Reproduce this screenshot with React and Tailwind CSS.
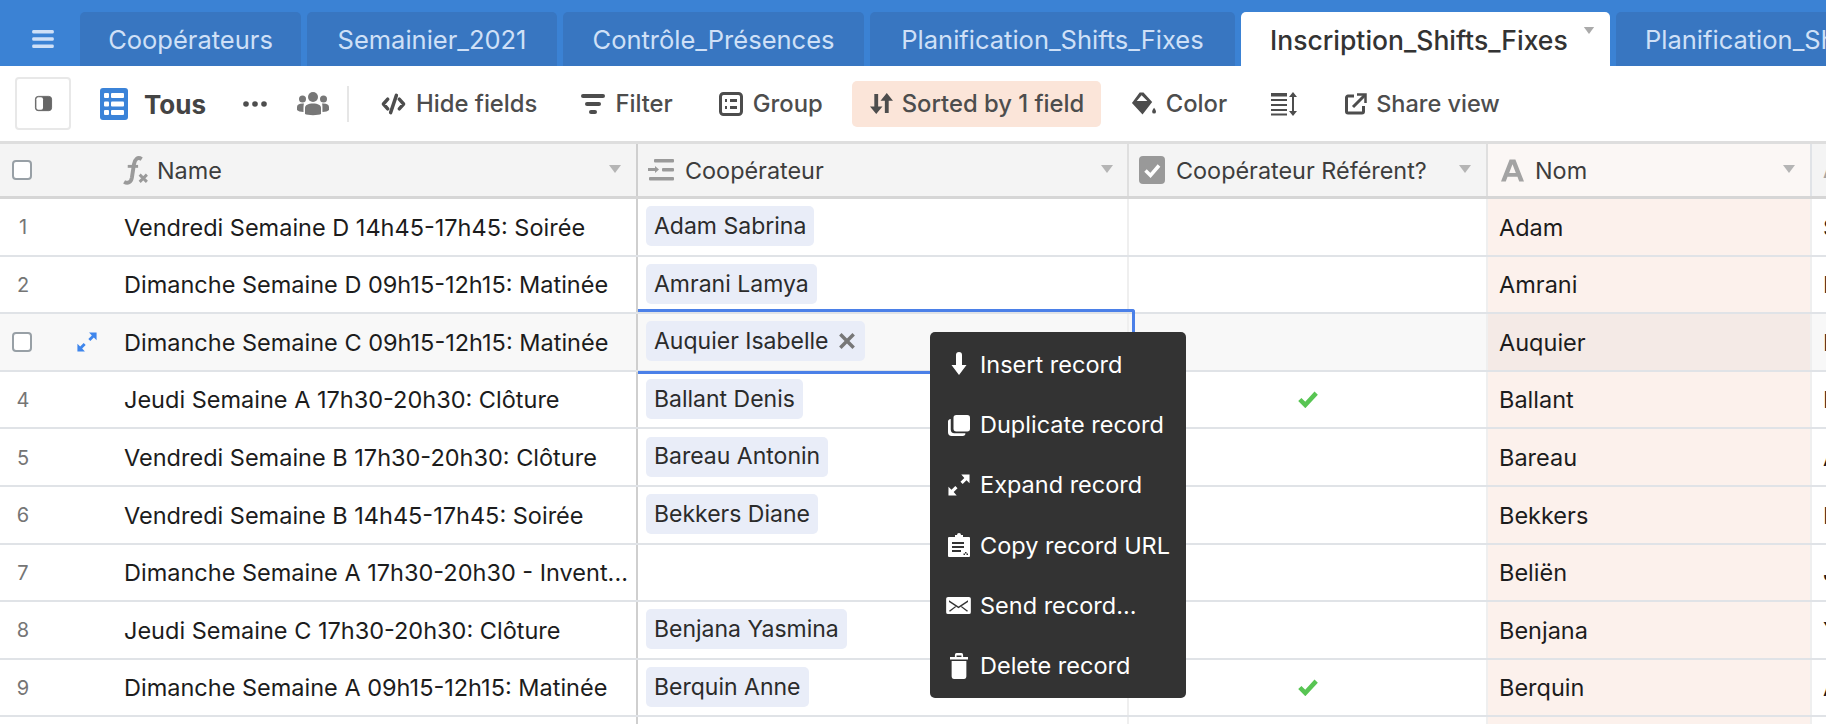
import React from 'react'

const tabs = [
  { label: 'Coopérateurs', w: 'w-[221px]' },
  { label: 'Semainier_2021', w: 'w-[250px]' },
  { label: 'Contrôle_Présences', w: 'w-[301px]' },
  { label: 'Planification_Shifts_Fixes', w: 'w-[365px]' },
]

const rows = [
  { n: 1, name: 'Vendredi Semaine D 14h45-17h45: Soirée', chip: 'Adam Sabrina', nom: 'Adam', first: 'Sabrina' },
  { n: 2, name: 'Dimanche Semaine D 09h15-12h15: Matinée', chip: 'Amrani Lamya', nom: 'Amrani', first: 'Lamya' },
  { n: 3, name: 'Dimanche Semaine C 09h15-12h15: Matinée', chip: 'Auquier Isabelle', nom: 'Auquier', first: 'Isabelle', active: true },
  { n: 4, name: 'Jeudi Semaine A 17h30-20h30: Clôture', chip: 'Ballant Denis', nom: 'Ballant', first: 'Denis', check: true },
  { n: 5, name: 'Vendredi Semaine B 17h30-20h30: Clôture', chip: 'Bareau Antonin', nom: 'Bareau', first: 'Antonin' },
  { n: 6, name: 'Vendredi Semaine B 14h45-17h45: Soirée', chip: 'Bekkers Diane', nom: 'Bekkers', first: 'Diane' },
  { n: 7, name: 'Dimanche Semaine A 17h30-20h30 - Invent...', nom: 'Beliën', first: 'Jan' },
  { n: 8, name: 'Jeudi Semaine C 17h30-20h30: Clôture', chip: 'Benjana Yasmina', nom: 'Benjana', first: 'Yasmina' },
  { n: 9, name: 'Dimanche Semaine A 09h15-12h15: Matinée', chip: 'Berquin Anne', nom: 'Berquin', first: 'Anne', check: true },
]

const Caret = ({ className }) => (
  <svg viewBox="0 0 14 10" className={className} fill="currentColor">
    <path d="M1 1h12L7 9z" />
  </svg>
)

const ExpandIcon = ({ className }) => (
  <svg viewBox="0 0 24 24" className={className} fill="currentColor">
    <path d="M23.500 .5v9.500l-3.300-3.300-4.200 4.200-2.400-2.400 4.200-4.200L14.500 .5zM.5 23.500V14l3.300 3.300 4.200-4.200 2.400 2.400-4.200 4.200 3.300 3.800z" />
  </svg>
)

const menuItems = [
  {
    label: 'Insert record',
    icon: (
      <svg viewBox="4 0 16 24" className="w-[16px] h-[24px]" fill="currentColor">
        <path d="M9 3a3 3 0 0 1 6 0v10h4.500L12 23 4.500 13H9z" />
      </svg>
    ),
  },
  {
    label: 'Duplicate record',
    icon: (
      <svg viewBox="0 0 24 24" className="w-[22px] h-[22px]" fill="currentColor">
        <path d="M9 1h12a3 3 0 0 1 3 3v12a3 3 0 0 1-3 3H9a3 3 0 0 1-3-3V4a3 3 0 0 1 3-3z" />
        <path d="M0 9a3 3 0 0 1 3-3.500V17a4 4 0 0 0 4 4h12a3 3 0 0 1-3 3H4a4 4 0 0 1-4-4z" />
      </svg>
    ),
  },
  {
    label: 'Expand record',
    icon: <ExpandIcon className="w-[22px] h-[22px]" />,
  },
  {
    label: 'Copy record URL',
    icon: (
      <svg viewBox="1 1 22 25" className="w-[22px] h-[25px]" fill="currentColor">
        <path fillRule="evenodd" d="M8 3h2a2 2 0 0 1 4 0h2v2h6a1 1 0 0 1 1 1v18a1 1 0 0 1-1 1H2a1 1 0 0 1-1-1V6a1 1 0 0 1 1-1h6zM5 10v2h12v-2zm0 4v2h12v-2zm0 4v2h9v-2zm13 2v1.500h-1.500V23H18v-1.500h1.500V23H21v-1.500h-1.500V20z" />
      </svg>
    ),
  },
  {
    label: 'Send record...',
    icon: (
      <svg viewBox="0 0 26 20" className="w-[25px] h-[19px]" fill="currentColor">
        <path fillRule="evenodd" d="M2 1h22a2 2 0 0 1 2 2v14a2 2 0 0 1-2 2H2a2 2 0 0 1-2-2V3a2 2 0 0 1 2-2zm1 3.500L13 11 23 4.500V6.200L13 13 3 6.200zM3 15.500l6.500-4.600.9.700L4 16.500zm20 0-6.500-4.600-.9.700 6.400 4.900z" />
      </svg>
    ),
  },
  {
    label: 'Delete record',
    icon: (
      <svg viewBox="1 0 22 26" className="w-[18px] h-[26px]" preserveAspectRatio="none" fill="currentColor">
        <path d="M7 2a2 2 0 0 1 2-2h6a2 2 0 0 1 2 2v2h6v2.500H1V4h6zm2 .5V4h6V2.500z" />
        <path d="M3 8h18v15a3 3 0 0 1-3 3H6a3 3 0 0 1-3-3z" />
      </svg>
    ),
  },
]

function Toolbar() {
  return (
    <div className="h-[75px] shrink-0 bg-white flex items-center text-[#4d4d4d] text-[23.800px] font-medium">
      <div className="ml-[15px] w-[56px] h-[53px] border-2 border-[#e8e8e8] rounded-[4px] flex items-center justify-center">
        <svg viewBox="0 0 20 20" className="w-[19px] h-[19px]">
          <rect x="1.500" y="2.500" width="17" height="15" rx="3" fill="#666" stroke="#666" />
          <rect x="2.500" y="3.500" width="7" height="13" rx="2" fill="#fff" />
        </svg>
      </div>
      <svg viewBox="0 0 28 32" className="ml-[29px] w-[28px] h-[32px]">
        <rect width="28" height="32" rx="3" fill="#3b83d8" />
        <g fill="#fff">
          <rect x="4" y="5" width="5" height="5" rx="1" />
          <rect x="11" y="5" width="13" height="5" rx="1" />
          <rect x="4" y="13.500" width="5" height="5" rx="1" />
          <rect x="11" y="13.500" width="13" height="5" rx="1" />
          <rect x="4" y="22" width="5" height="5" rx="1" />
          <rect x="11" y="22" width="13" height="5" rx="1" />
        </g>
      </svg>
      <span className="ml-[16px] mt-[2px] text-[26px] font-bold text-[#444]">Tous</span>
      <svg viewBox="0 0 24 6" className="ml-[37px] w-[24px] h-[6px]" fill="#4d4d4d">
        <circle cx="3" cy="3" r="2.800" />
        <circle cx="12" cy="3" r="2.800" />
        <circle cx="21" cy="3" r="2.800" />
      </svg>
      <svg viewBox="0 0 32 24" className="ml-[30px] w-[32px] h-[24px]" fill="#777">
        <circle cx="16" cy="5" r="5" />
        <circle cx="5.500" cy="7" r="3.500" />
        <circle cx="26.500" cy="7" r="3.500" />
        <path d="M8 22v-6c0-3 3-4.500 8-4.500s8 1.500 8 4.500v6c-2 1.500-14 1.500-16 0z" />
        <path d="M0 18v-3c0-2 2-3.500 5.500-3.500 1 0 1.500.1 1.500.1C6.500 13 6.500 15 6.500 20 3.500 20 1 19 0 18zM32 18v-3c0-2-2-3.500-5.500-3.500-1 0-1.500.1-1.500.1.500 1.400.5 3.400.5 8.400 3 0 5.500-1 6.500-2z" />
      </svg>
      <div className="ml-[18px] w-[2px] h-[36px] bg-[#e6e6e6]" />
      <svg viewBox="0 0 26 22" className="ml-[32px] w-[25px] h-[22px]" fill="none" stroke="#4d4d4d" strokeWidth="3.600" strokeLinecap="round" strokeLinejoin="round">
        <path d="M7 6 2.500 11 7 16M19 6l4.500 5-4.500 5M16 2l-6 18" />
      </svg>
      <span className="ml-[10px]">Hide fields</span>
      <svg viewBox="0 0 24 20" className="ml-[44px] w-[24px] h-[20px]" fill="#4d4d4d">
        <rect width="24" height="4" rx="2" />
        <rect x="4" y="8" width="16" height="4" rx="2" />
        <rect x="8" y="16" width="8" height="4" rx="2" />
      </svg>
      <span className="ml-[10px]">Filter</span>
      <svg viewBox="0 0 24 24" className="ml-[46px] w-[24px] h-[24px]" fill="none" stroke="#4d4d4d" strokeWidth="3">
        <rect x="1.500" y="1.500" width="21" height="21" rx="3" />
        <path d="M6 8.500h2M11 8.500h7M6 15.500h2M11 15.500h7" />
      </svg>
      <span className="ml-[10px]">Group</span>
      <div className="ml-[29px] w-[249px] h-[46px] bg-[#fbe5d9] rounded-[5px] flex items-center pl-[18px]">
        <svg viewBox="0 0 24 24" className="w-[23px] h-[23px]" fill="#4d4d4d">
          <path d="M4.500 2h4v13H13l-6.500 8L0 15h4.500zM15.500 22h4V9H24L17.500 1 11 9h4.500z" />
        </svg>
        <span className="ml-[9px] whitespace-nowrap">Sorted by 1 field</span>
      </div>
      <svg viewBox="0 0 26 26" className="ml-[30px] w-[25px] h-[26px]" fill="#4d4d4d">
        <path fillRule="evenodd" d="M9 1h4l9 10-10 13L1 12zm2 3L6 10h11z" />
        <path d="M24 17c1 1.500 2 3 2 4a2 2 0 0 1-4 0c0-1 1-2.500 2-4z" />
      </svg>
      <span className="ml-[10px]">Color</span>
      <svg viewBox="0 0 26 24" className="ml-[44px] w-[26px] h-[24px]" fill="#4d4d4d">
        <rect y="1" width="16" height="3.500" />
        <rect y="7" width="16" height="2" />
        <rect y="12" width="16" height="2" />
        <rect y="17" width="16" height="2" />
        <rect y="21.500" width="16" height="2" />
        <path d="M22 0l4 5h-3v14h3l-4 5-4-5h3V5h-3z" />
      </svg>
      <svg viewBox="0 0 22 22" className="ml-[48px] w-[22px] h-[22px]" fill="none" stroke="#4d4d4d" strokeWidth="3">
        <path d="M9 3H3a1.500 1.500 0 0 0-1.500 1.500v14A1.500 1.500 0 0 0 3 20h14a1.500 1.500 0 0 0 1.500-1.500V13" />
        <path d="M8 14 20 2" />
        <path d="M12 1.500h8.500V10" strokeWidth="2.500" />
      </svg>
      <span className="ml-[9px] whitespace-nowrap text-[23.500px]">Share view</span>
    </div>
  )
}

function HeaderRow() {
  return (
    <div className="h-[58px] shrink-0 flex border-y-[3px] border-t-[#dedede] border-b-[#d6d6d6] bg-[#f4f4f4] text-[23.400px] text-[#3d3d3d]">
      <div className="w-[638px] shrink-0 flex items-center relative border-r-2 border-[#cfcfcf]">
        <div className="ml-[12px] w-[20px] h-[20px] border-2 border-[#98a0a6] rounded-[4px] bg-white" />
        <svg viewBox="0 0 26 28" className="ml-[90px] w-[27px] h-[29px]" fill="none" stroke="#9a9a9a" strokeWidth="3.800">
          <path d="M19 3c-4-2.500-6.500 0-7.500 5L9.500 21c-.8 4.500-4 6-7.500 4" />
          <path d="M5.500 10h10" strokeWidth="2.800" />
          <path d="M17 18l7 7M24 18l-7 7" strokeWidth="2.800" />
        </svg>
        <span className="ml-[8px] pt-[2px]">Name</span>
        <Caret className="absolute right-[14px] top-[20px] w-[14px] h-[10px] text-[#b5b5b5]" />
      </div>
      <div className="w-[491px] shrink-0 flex items-center relative border-r-2 border-[#dfdfdf] pl-[10px]">
        <svg viewBox="0 0 26 26" className="w-[26px] h-[26px]" fill="#9a9a9a">
          <rect x="6" y="2" width="20" height="3.500" rx="1" />
          <rect y="11" width="7" height="3" />
          <path d="M7 9l4 3.500L7 16z" />
          <rect x="14" y="11" width="12" height="3.500" rx="1" />
          <rect x="1" y="20" width="25" height="3.500" rx="1" />
        </svg>
        <span className="ml-[11px] pt-[2px]">Coopérateur</span>
        <Caret className="absolute right-[13px] top-[20px] w-[14px] h-[10px] text-[#b5b5b5]" />
      </div>
      <div className="w-[359px] shrink-0 flex items-center relative border-r-2 border-[#dfdfdf] pl-[10px]">
        <svg viewBox="0 0 26 28" className="w-[26px] h-[28px]">
          <rect width="26" height="28" rx="4" fill="#999" />
          <path d="M6.500 14.500l5 5 8.500-10" fill="none" stroke="#fff" strokeWidth="3.500" />
        </svg>
        <span className="ml-[11px] pt-[2px] whitespace-nowrap">Coopérateur Référent?</span>
        <Caret className="absolute right-[14px] top-[20px] w-[14px] h-[10px] text-[#b5b5b5]" />
      </div>
      <div className="w-[324px] shrink-0 flex items-center relative border-r-2 border-[#e0e3e7] bg-[#fbf7f5] pl-[13px]">
        <svg viewBox="0 0 24 24" className="w-[23px] h-[24px]" fill="#a3a3a3">
          <path fillRule="evenodd" d="M9 1h6l9 23h-5l-1.800-5H6.800L5 24H0zm3 5-3.500 9h7z" />
        </svg>
        <span className="ml-[11px] pt-[2px]">Nom</span>
        <Caret className="absolute right-[14px] top-[20px] w-[14px] h-[10px] text-[#b5b5b5]" />
      </div>
      <div className="flex-1 flex items-center pl-[11px]">
        <span className="text-[#a3a3a3] font-bold">A</span>
      </div>
    </div>
  )
}

function Row({ row }) {
  const hover = row.active
  return (
    <div className={`h-[57.600px] shrink-0 flex border-b-2 border-[#e0e3e7] text-[23.500px] text-[#1c1c1c] ${hover ? 'bg-[#f8f8f8]' : 'bg-white'}`}>
      <div className="w-[638px] shrink-0 flex items-center relative border-r-2 border-[#cfcfcf] pt-[1px]">
        {hover ? (
          <>
            <div className="ml-[12px] w-[20px] h-[20px] border-2 border-[#98a0a6] rounded-[4px] bg-white" />
            <ExpandIcon className="ml-[45px] w-[20px] h-[20px] text-[#3f86ec]" />
            <span className="ml-[27px] whitespace-nowrap">{row.name}</span>
          </>
        ) : (
          <>
            <span className="w-[46px] text-center text-[#757575] text-[20px]">{row.n}</span>
            <span className="ml-[78px] whitespace-nowrap">{row.name}</span>
          </>
        )}
      </div>
      <div className="w-[491px] shrink-0 flex items-center relative border-r-2 border-[#efefef] pl-[8px] pb-[1px]">
        {row.chip && (
          <span className="h-[40px] px-[8px] flex items-center gap-[10px] bg-[#e9edf8] rounded-[5px] whitespace-nowrap text-[#2b2b2b] text-[23px]">
            {row.chip}
            {row.active && (
              <svg viewBox="0 0 12 12" className="w-[16px] h-[16px] mr-[2px]" stroke="#777" strokeWidth="2.600">
                <path d="M1 1l10 10M11 1 1 11" />
              </svg>
            )}
          </span>
        )}
        {row.active && <div className="absolute left-0 -right-[8px] -top-[5px] -bottom-[4px] border-[3px] border-l-0 border-[#4b80e8] rounded-r-[3px] pointer-events-none" />}
      </div>
      <div className="w-[359px] shrink-0 flex items-center justify-center border-r-2 border-[#efefef]">
        {row.check && (
          <svg viewBox="0 0 22 18" className="w-[20px] h-[17px]" fill="none" stroke="#58c553" strokeWidth="5">
            <path d="M2 9l6 6L20 2" />
          </svg>
        )}
      </div>
      <div className={`w-[324px] shrink-0 flex items-center border-r-2 border-[#efefef] pl-[11px] pt-[1px] ${hover ? 'bg-[#f4eae6]' : 'bg-[#fcf1ec]'}`}>
        {row.nom}
      </div>
      <div className="flex-1 flex items-center pl-[11px] pt-[1px] overflow-hidden whitespace-nowrap">{row.first}</div>
    </div>
  )
}

export default function App() {
  return (
    <div className="w-[1826px] h-[724px] overflow-hidden relative bg-white [font-family:Inter,sans-serif] flex flex-col">
      <div className="h-[66px] shrink-0 bg-[#3b82d4] flex items-end overflow-hidden">
        <div className="w-[80px] h-[54px] shrink-0 flex items-center justify-center pl-[6px]">
          <svg viewBox="0 0 24 20" className="w-[22px] h-[18px]" fill="#cfe0f7">
            <rect width="24" height="4" rx="1.500" />
            <rect y="8" width="24" height="4" rx="1.500" />
            <rect y="16" width="24" height="4" rx="1.500" />
          </svg>
        </div>
        <div className="flex gap-[6px] items-end">
          {tabs.map((tab) => (
            <div key={tab.label} className={`${tab.w} h-[54px] pt-[3px] bg-[#3876c1] rounded-t-[5px] flex items-center justify-center text-[25.500px] text-[#cfe0f7] whitespace-nowrap`}>
              {tab.label}
            </div>
          ))}
          <div className="w-[369px] h-[54px] pt-[3px] bg-white rounded-t-[5px] flex items-center pl-[29px] relative text-[26.500px] font-medium text-[#333] whitespace-nowrap">
            Inscription_Shifts_Fixes
            <Caret className="absolute right-[15px] top-[14px] w-[12px] h-[9px] text-[#aaa]" />
          </div>
          <div className="w-[300px] h-[54px] pt-[3px] bg-[#3876c1] rounded-tl-[5px] flex items-center pl-[29px] text-[25.500px] text-[#cfe0f7] whitespace-nowrap">
            Planification_Shifts_Fixes
          </div>
        </div>
      </div>
      <Toolbar />
      <HeaderRow />
      {rows.map((row) => (
        <Row key={row.n} row={row} />
      ))}
      <div className="flex-1 flex">
        <div className="w-[638px] shrink-0 border-r-2 border-[#cfcfcf]" />
        <div className="w-[491px] shrink-0 border-r-2 border-[#efefef]" />
        <div className="w-[359px] shrink-0 border-r-2 border-[#efefef]" />
        <div className="w-[324px] shrink-0 border-r-2 border-[#efefef] bg-[#fcf1ec]" />
      </div>
      <div className="absolute left-[930px] top-[332px] w-[256px] h-[366px] bg-[#333333] rounded-[5px] py-[1px] text-white text-[23.500px] flex flex-col justify-center z-10">
        {menuItems.map((item) => (
          <div key={item.label} className="h-[60.300px] flex items-center pl-[16px]">
            <span className="w-[25px] flex justify-center">{item.icon}</span>
            <span className="ml-[9px] whitespace-nowrap">{item.label}</span>
          </div>
        ))}
      </div>
    </div>
  )
}
